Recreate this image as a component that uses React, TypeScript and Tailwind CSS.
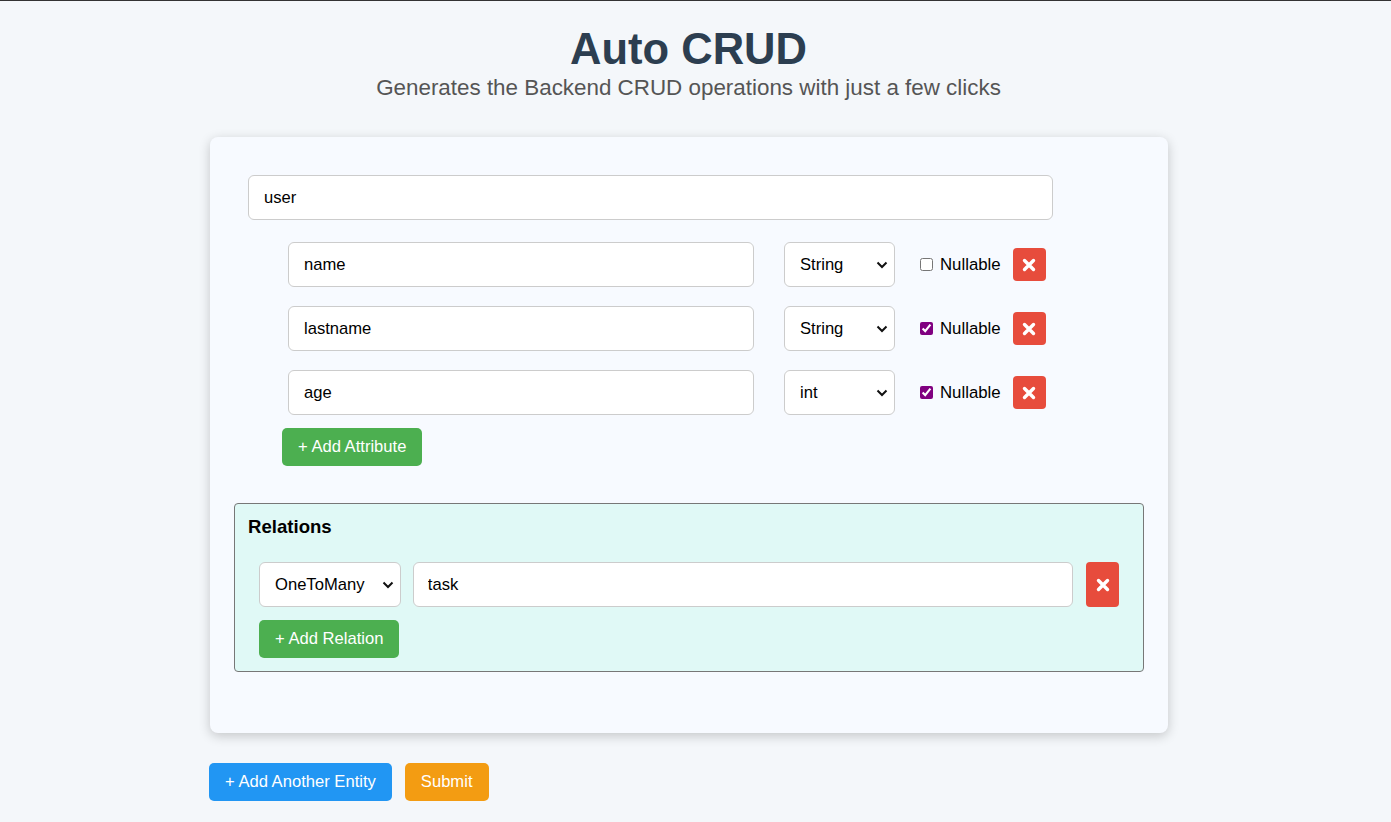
import { useState } from "react";

type Attr = { name: string; type: string; nullable: boolean };

const font = { fontFamily: '"Liberation Sans", Arial, sans-serif' };

function XIcon() {
  return (
    <svg width="14" height="14" viewBox="0 0 14 14">
      <path d="M2.5 2.5 L11.5 11.5 M11.5 2.5 L2.5 11.5" stroke="white" strokeWidth="3.4" strokeLinecap="round" />
    </svg>
  );
}

function Select({
  value,
  options,
  width,
  onChange,
}: {
  value: string;
  options: string[];
  width: string;
  onChange: (v: string) => void;
}) {
  return (
    <div className={`relative ${width} h-[45px]`}>
      <select
        className="appearance-none w-full h-full bg-white border border-[#ccc] rounded-[6px] pl-[15px] pr-[28px] pt-px text-[16.6px] outline-none"
        value={value}
        onChange={(e) => onChange(e.target.value)}
      >
        {options.map((o) => (
          <option key={o}>{o}</option>
        ))}
      </select>
      <svg
        className="pointer-events-none absolute right-[7px] top-[19px]"
        width="12"
        height="8"
        viewBox="0 0 12 8"
      >
        <path d="M1.5 1.5 L6 6 L10.5 1.5" fill="none" stroke="#111" strokeWidth="2" />
      </svg>
    </div>
  );
}

export default function App() {
  const [entity, setEntity] = useState("user");
  const [attrs, setAttrs] = useState<Attr[]>([
    { name: "name", type: "String", nullable: false },
    { name: "lastname", type: "String", nullable: true },
    { name: "age", type: "int", nullable: true },
  ]);
  const [relType, setRelType] = useState("OneToMany");
  const [relTarget, setRelTarget] = useState("task");

  const update = (i: number, patch: Partial<Attr>) =>
    setAttrs(attrs.map((a, j) => (j === i ? { ...a, ...patch } : a)));

  return (
    <div className="min-h-screen bg-[#f4f7fa] border-t border-[#333] text-black" style={font}>
      <div className="text-center pt-[22px] pr-[14px]">
        <h1 className="text-[43.5px] leading-[52px] font-bold text-[#2c3e50]">Auto CRUD</h1>
        <p className="text-[22.4px] leading-[26px] text-[#555]">
          Generates the Backend CRUD operations with just a few clicks
        </p>
      </div>

      <div className="ml-[209px] w-[960px] mt-[36px]">
        <div className="ml-px w-[958px] bg-[#f7faff] rounded-lg shadow-[0_3px_12px_rgba(0,0,0,0.2)] pt-[38px] px-[24px] pb-[61px]">
          <input
            className="ml-[14px] w-[805px] h-[45px] bg-white border border-[#ccc] rounded-[6px] px-[15px] text-[16.6px] outline-none"
            value={entity}
            onChange={(e) => setEntity(e.target.value)}
          />

          <div className="mt-[22px] ml-[54px] flex flex-col gap-[19px]">
            {attrs.map((a, i) => (
              <div key={i} className="flex items-center h-[45px]">
                <input
                  className="w-[466px] h-[45px] bg-white border border-[#ccc] rounded-[6px] px-[15px] text-[16.6px] outline-none"
                  value={a.name}
                  onChange={(e) => update(i, { name: e.target.value })}
                />
                <div className="ml-[30px]">
                  <Select
                    width="w-[111px]"
                    value={a.type}
                    options={["String", "int", "boolean", "Date"]}
                    onChange={(v) => update(i, { type: v })}
                  />
                </div>
                <label className="ml-[25px] flex items-center gap-[7px] text-[16.8px]">
                  <input
                    type="checkbox"
                    className="w-[13px] h-[13px] m-0 accent-[#800080]"
                    checked={a.nullable}
                    onChange={(e) => update(i, { nullable: e.target.checked })}
                  />
                  Nullable
                </label>
                <button
                  className="ml-[12px] w-[33px] h-[33px] bg-[#e74c3c] rounded-[4px] flex items-center justify-center"
                  onClick={() => setAttrs(attrs.filter((_, j) => j !== i))}
                >
                  <XIcon />
                </button>
              </div>
            ))}
          </div>

          <button
            className="mt-[13px] ml-[48px] h-[38px] px-[16px] bg-[#4caf50] text-white text-[16.6px] rounded-[5px]"
            onClick={() => setAttrs([...attrs, { name: "", type: "String", nullable: false }])}
          >
            + Add Attribute
          </button>

          <div className="mt-[37px] w-[910px] bg-[#e0f9f6] border border-[#777] rounded-[4px] pt-[12px] pb-[13px] px-[13px]">
            <h3 className="text-[18.6px] leading-[22px] font-bold">Relations</h3>
            <div className="mt-[24px] ml-[11px] flex items-center gap-[12px] w-[860px]">
              <Select
                width="w-[142px]"
                value={relType}
                options={["OneToMany", "ManyToOne", "OneToOne", "ManyToMany"]}
                onChange={setRelType}
              />
              <input
                className="w-[661px] h-[45px] bg-white border border-[#ccc] rounded-[6px] px-[14px] text-[16.6px] outline-none"
                value={relTarget}
                onChange={(e) => setRelTarget(e.target.value)}
              />
              <button className="ml-px w-[33px] h-[45px] bg-[#e74c3c] rounded-[4px] flex items-center justify-center">
                <XIcon />
              </button>
            </div>
            <button className="mt-[13px] ml-[11px] h-[38px] px-[16px] bg-[#4caf50] text-white text-[16.6px] rounded-[5px]">
              + Add Relation
            </button>
          </div>
        </div>

        <div className="mt-[30px] flex gap-[13px] pb-[20px]">
          <button className="h-[38px] px-[16px] bg-[#2196f3] text-white text-[16.6px] rounded-[5px]">
            + Add Another Entity
          </button>
          <button className="h-[38px] px-[16px] bg-[#f39c12] text-white text-[16.6px] rounded-[5px]">
            Submit
          </button>
        </div>
      </div>
    </div>
  );
}
